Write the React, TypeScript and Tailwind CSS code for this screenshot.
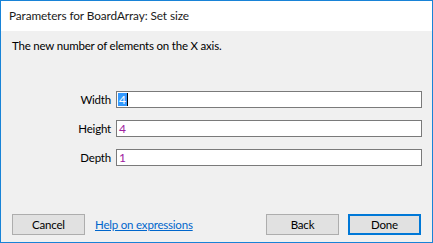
import React from 'react'

const font = { fontFamily: 'Lato, "Noto Sans", sans-serif' }

function Field({ label, value, selected }: { label: string; value: string; selected?: boolean }) {
  return (
    <div className="flex items-center h-[17px]">
      <div className="w-[115px] pr-[5px] text-right text-black">{label}</div>
      <div className="flex-1 h-[17px] mr-[10px] border border-[#7a7a7a] bg-white flex items-center pl-[1px] text-[12px] leading-none">
        {selected ? (
          <>
            <span className="bg-[#3399ff] text-white h-[13px] px-[1px] flex items-center">{value}</span>
            <span className="w-px h-[13px] bg-black" />
          </>
        ) : (
          <span className="text-[#a020a0] px-[1px]">{value}</span>
        )}
      </div>
    </div>
  )
}

export default function App() {
  return (
    <div className="w-[433px] h-[243px] border border-[#1883d7] flex flex-col bg-[#f0f0f0] text-[11.5px] tracking-[-0.2px]" style={font}>
      <div className="h-[30px] bg-white flex items-center pl-[8px] text-[11.8px] tracking-[-0.1px] text-[#1a1a1a]">
        Parameters for BoardArray: Set size
      </div>
      <div className="flex-1 flex flex-col px-[11px] pt-[7px]">
        <div className="text-black leading-[16px]">The new number of elements on the X axis.</div>
        <div className="flex flex-col gap-[12px] mt-[37px] -mx-[11px]">
          <Field label="Width" value="4" selected />
          <Field label="Height" value="4" />
          <Field label="Depth" value="1" />
        </div>
        <div className="flex items-center mt-auto mb-[7px] h-[21px]">
          <button className="w-[73px] h-[21px] border border-[#adadad] bg-[#e1e1e1] text-black">Cancel</button>
          <a className="ml-[10px] text-[#0066cc] underline">Help on expressions</a>
          <div className="flex-1" />
          <button className="w-[73px] h-[21px] border border-[#adadad] bg-[#e1e1e1] text-black">Back</button>
          <button className="ml-[9px] w-[73px] h-[21px] border-2 border-[#0078d7] bg-[#e1e1e1] text-black">Done</button>
        </div>
      </div>
    </div>
  )
}
